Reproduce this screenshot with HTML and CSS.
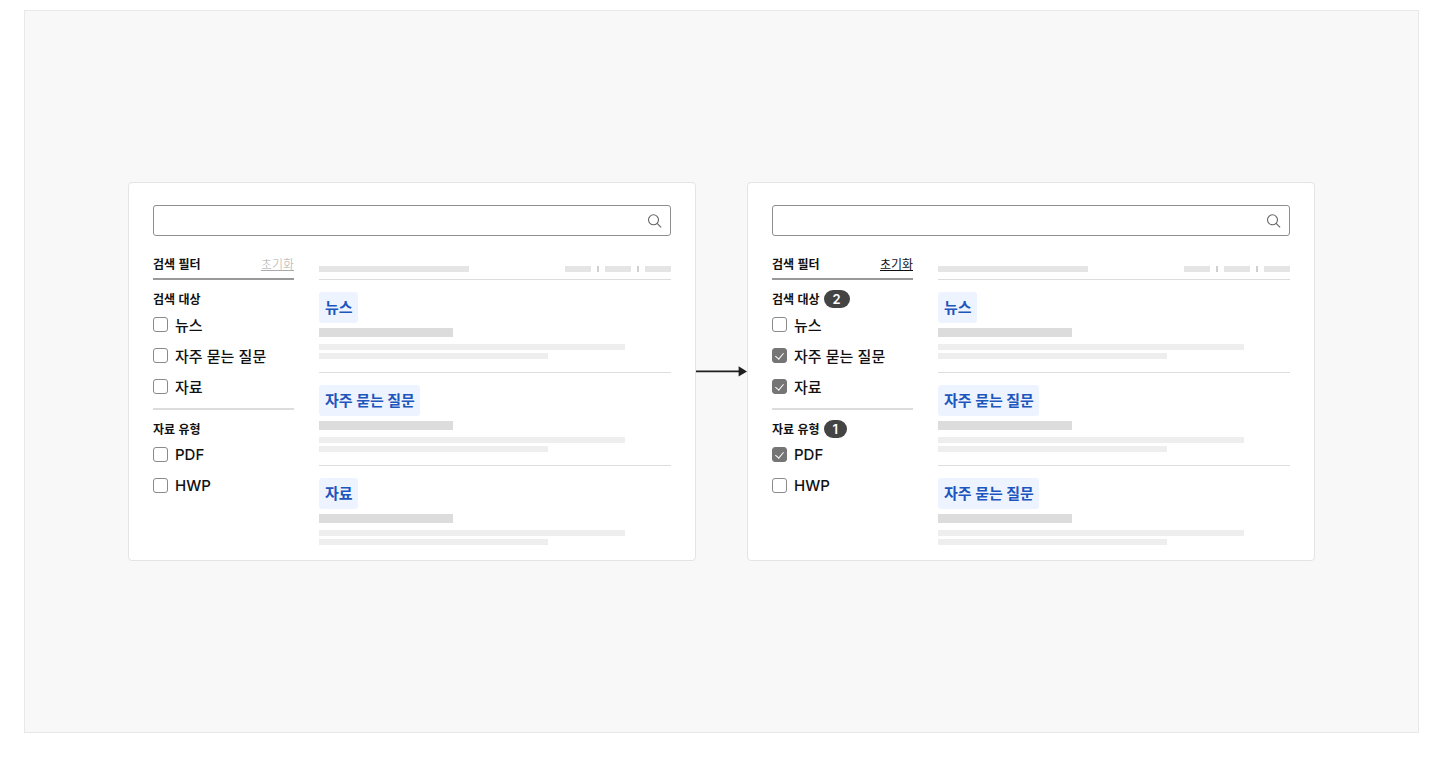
FILE: index.html
```html
<!DOCTYPE html>
<html lang="ko">
<head>
  <meta charset="UTF-8" />
  <meta name="viewport" content="width=device-width, initial-scale=1.0" />
  <title>검색 필터</title>
  <link rel="stylesheet" href="styles.css">
</head>
<body>
  <main class="stage">
    <section class="panel">
      <form class="search">
        <input type="text" class="search-input" aria-label="검색어">
        <button type="button" class="search-btn" aria-label="검색">
          <svg width="16" height="16" viewBox="0 0 16 16" fill="none" stroke="#666" stroke-width="1.1"><circle cx="6.5" cy="6.8" r="5"/><path d="M10.1 10.4L14.1 14.4"/></svg>
        </button>
      </form>
      <div class="content">
        <aside class="filters">
          <div class="filter-head">
            <h2 class="filter-title">검색 필터</h2>
            <button type="button" class="reset" disabled>초기화</button>
          </div>
          <fieldset class="group">
            <legend class="group-title">검색 대상</legend>
            <label class="check"><input type="checkbox">뉴스</label>
            <label class="check"><input type="checkbox">자주 묻는 질문</label>
            <label class="check"><input type="checkbox">자료</label>
          </fieldset>
          <fieldset class="group">
            <legend class="group-title">자료 유형</legend>
            <label class="check latin"><input type="checkbox">PDF</label>
            <label class="check latin"><input type="checkbox">HWP</label>
          </fieldset>
        </aside>
        <div class="results">
          <div class="results-head">
            <span class="bar bar-count"></span>
            <div class="sort">
              <span class="bar bar-sort"></span><span class="sep"></span>
              <span class="bar bar-sort"></span><span class="sep"></span>
              <span class="bar bar-sort"></span>
            </div>
          </div>
          <article class="item">
            <span class="tag">뉴스</span>
            <div class="line line-title"></div>
            <div class="line line-long"></div>
            <div class="line line-short"></div>
          </article>
          <article class="item">
            <span class="tag">자주 묻는 질문</span>
            <div class="line line-title"></div>
            <div class="line line-long"></div>
            <div class="line line-short"></div>
          </article>
          <article class="item">
            <span class="tag">자료</span>
            <div class="line line-title"></div>
            <div class="line line-long"></div>
            <div class="line line-short"></div>
          </article>
        </div>
      </div>
    </section>

    <svg class="arrow" width="51" height="12" viewBox="0 0 51 12" fill="#1e1e1e"><path d="M0 4.6H44V6.2H0z"/><path d="M42.6 0.2L51 5.4L42.6 10.6z"/></svg>

    <section class="panel">
      <form class="search">
        <input type="text" class="search-input" aria-label="검색어">
        <button type="button" class="search-btn" aria-label="검색">
          <svg width="16" height="16" viewBox="0 0 16 16" fill="none" stroke="#666" stroke-width="1.1"><circle cx="6.5" cy="6.8" r="5"/><path d="M10.1 10.4L14.1 14.4"/></svg>
        </button>
      </form>
      <div class="content">
        <aside class="filters">
          <div class="filter-head">
            <h2 class="filter-title">검색 필터</h2>
            <button type="button" class="reset">초기화</button>
          </div>
          <fieldset class="group">
            <legend class="group-title">검색 대상 <span class="badge">2</span></legend>
            <label class="check"><input type="checkbox">뉴스</label>
            <label class="check"><input type="checkbox" checked>자주 묻는 질문</label>
            <label class="check"><input type="checkbox" checked>자료</label>
          </fieldset>
          <fieldset class="group">
            <legend class="group-title">자료 유형 <span class="badge">1</span></legend>
            <label class="check latin"><input type="checkbox" checked>PDF</label>
            <label class="check latin"><input type="checkbox">HWP</label>
          </fieldset>
        </aside>
        <div class="results">
          <div class="results-head">
            <span class="bar bar-count"></span>
            <div class="sort">
              <span class="bar bar-sort"></span><span class="sep"></span>
              <span class="bar bar-sort"></span><span class="sep"></span>
              <span class="bar bar-sort"></span>
            </div>
          </div>
          <article class="item">
            <span class="tag">뉴스</span>
            <div class="line line-title"></div>
            <div class="line line-long"></div>
            <div class="line line-short"></div>
          </article>
          <article class="item">
            <span class="tag">자주 묻는 질문</span>
            <div class="line line-title"></div>
            <div class="line line-long"></div>
            <div class="line line-short"></div>
          </article>
          <article class="item">
            <span class="tag">자주 묻는 질문</span>
            <div class="line line-title"></div>
            <div class="line line-long"></div>
            <div class="line line-short"></div>
          </article>
        </div>
      </div>
    </section>
  </main>
</body>
</html>
```
FILE: styles.css
```css
* {
  box-sizing: border-box;
}
body {
  margin: 0;
  padding: 10px 24px 24px;
  background: #fff;
  color: #111;
  font-family: "Noto Sans CJK KR", sans-serif;
}
button {
  font-family: inherit;
  background: none;
  border: none;
  padding: 0;
  cursor: pointer;
}
.stage {
  display: flex;
  align-items: center;
  padding: 171px 103px;
  background: #f8f8f8;
  border: 1px solid #e8e8e8;
}
.panel {
  flex: 1;
  min-width: 0;
  padding: 22px 24px 15px;
  background: #fff;
  border: 1px solid #e4e4e4;
  border-radius: 4px;
}
.arrow {
  flex: none;
}

/* search box */
.search {
  display: flex;
  align-items: center;
  height: 31px;
  padding-right: 7px;
  border: 1px solid #8e8e8e;
  border-radius: 3px;
}
.search-input {
  flex: 1;
  min-width: 0;
  height: 100%;
  padding: 0 10px;
  border: none;
  outline: none;
  background: none;
  font: inherit;
  font-size: 15px;
}
.search-btn,
.search-btn svg {
  display: block;
}

/* filters */
.content {
  display: flex;
  gap: 25px;
  margin-top: 14px;
}
.filters {
  flex: none;
  width: 141px;
}
.filter-head {
  display: flex;
  justify-content: space-between;
  align-items: center;
  height: 30px;
  border-bottom: 2px solid #999;
}
.filter-title,
.group-title {
  margin: 0;
  padding: 0;
  font-size: 12px;
  line-height: 18px;
  font-weight: 700;
}
.reset {
  font-size: 12px;
  line-height: 13px;
  color: #111;
  border-bottom: 1px solid #111;
}
.reset:disabled {
  font-weight: 300;
  color: #aaa;
  border-color: #aaa;
  cursor: default;
}
.group {
  display: flex;
  flex-direction: column;
  gap: 8px;
  min-width: 0;
  margin: 10px 0 0;
  padding: 0;
  border: none;
}
.group:not(:last-child) {
  padding-bottom: 10px;
  border-bottom: 2px solid #dcdcdc;
}
.group-title {
  display: flex;
  align-items: center;
  gap: 4px;
  margin-bottom: 5px;
}
.badge {
  padding: 0 9px;
  border-radius: 9px;
  background: #444;
  color: #fff;
  font-family: Inter, sans-serif;
  font-size: 13px;
  line-height: 18px;
  font-weight: 600;
}
.check {
  display: flex;
  align-items: center;
  gap: 7px;
  height: 23px;
  font-size: 15px;
  line-height: 22px;
  font-weight: 500;
  white-space: nowrap;
}
.latin {
  font-family: Inter, sans-serif;
}
.check input {
  appearance: none;
  display: flex;
  align-items: center;
  justify-content: center;
  width: 15px;
  height: 15px;
  margin: 0;
  border: 1px solid #8a8a8a;
  border-radius: 3px;
  background: #fff;
}
.check input:checked {
  background: #757575;
  border-color: #757575;
}
.check input:checked::after {
  content: "";
  width: 4px;
  height: 7px;
  margin-bottom: 2px;
  border: solid #fff;
  border-width: 0 1px 1px 0;
  transform: rotate(40deg);
}

/* results */
.results {
  flex: 1;
  min-width: 0;
}
.results-head {
  display: flex;
  justify-content: space-between;
  align-items: flex-end;
  height: 30px;
  padding-bottom: 7px;
  border-bottom: 1px solid #dcdcdc;
}
.sort {
  display: flex;
  gap: 6px;
}
.bar {
  height: 6px;
  background: #e5e5e5;
}
.bar-count {
  width: 150px;
}
.bar-sort {
  width: 26px;
}
.sep {
  width: 2px;
  background: #d0d0d0;
}
.item {
  padding-top: 12px;
}
.item:not(:last-child) {
  padding-bottom: 13px;
  border-bottom: 1px solid #dedede;
}
.tag {
  display: block;
  width: fit-content;
  padding: 0 5px 0 6px;
  border-radius: 3px;
  background: #eef4ff;
  color: #1d56bc;
  font-family: Inter, "Noto Sans CJK KR", sans-serif;
  font-size: 15px;
  line-height: 31px;
  font-weight: 700;
  white-space: nowrap;
}
.line {
  height: 6px;
  margin-top: 3px;
  background: #eee;
}
.line-title {
  width: 38%;
  height: 9px;
  margin-top: 5px;
  background: #dcdcdc;
}
.line-long {
  width: 87%;
  margin-top: 7px;
}
.line-short {
  width: 65%;
}
```
